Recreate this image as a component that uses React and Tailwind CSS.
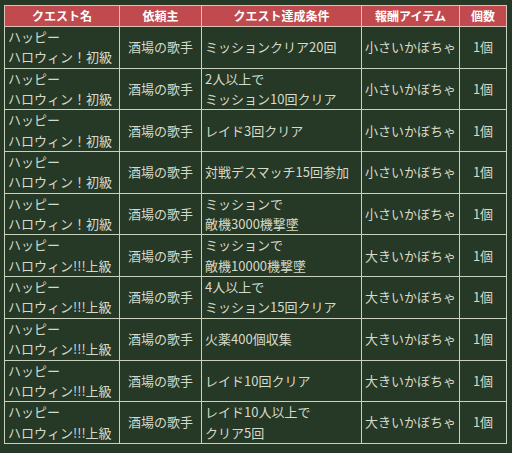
import React from "react";

const rows = [
  ["ハッピー\nハロウィン！初級", "酒場の歌手", "ミッションクリア20回", "小さいかぼちゃ"],
  ["ハッピー\nハロウィン！初級", "酒場の歌手", "2人以上で\nミッション10回クリア", "小さいかぼちゃ"],
  ["ハッピー\nハロウィン！初級", "酒場の歌手", "レイド3回クリア", "小さいかぼちゃ"],
  ["ハッピー\nハロウィン！初級", "酒場の歌手", "対戦デスマッチ15回参加", "小さいかぼちゃ"],
  ["ハッピー\nハロウィン！初級", "酒場の歌手", "ミッションで\n敵機3000機撃墜", "小さいかぼちゃ"],
  ["ハッピー\nハロウィン!!!上級", "酒場の歌手", "ミッションで\n敵機10000機撃墜", "大きいかぼちゃ"],
  ["ハッピー\nハロウィン!!!上級", "酒場の歌手", "4人以上で\nミッション15回クリア", "大きいかぼちゃ"],
  ["ハッピー\nハロウィン!!!上級", "酒場の歌手", "火薬400個収集", "大きいかぼちゃ"],
  ["ハッピー\nハロウィン!!!上級", "酒場の歌手", "レイド10回クリア", "大きいかぼちゃ"],
  ["ハッピー\nハロウィン!!!上級", "酒場の歌手", "レイド10人以上で\nクリア5回", "大きいかぼちゃ"],
];

export default function App() {
  return (
    <div
      className="w-[512px] h-[453px] bg-[#263826] pt-[5px] pl-[4px] overflow-hidden"
      style={{ fontFamily: '"Noto Sans CJK JP", "Noto Sans", sans-serif' }}
    >
      <table className="border-collapse table-fixed w-[502px] text-[13px] text-[#d6dac8]">
        <colgroup>
          <col className="w-[115px]" />
          <col className="w-[82px]" />
          <col className="w-[160px]" />
          <col className="w-[98px]" />
          <col className="w-[47px]" />
        </colgroup>
        <thead>
          <tr className="bg-[#c14a4f] text-white text-[12px] font-bold leading-[20px]">
            <th className="border border-[#d9c4b8] p-0 text-center">クエスト名</th>
            <th className="border border-[#d9c4b8] p-0 text-center">依頼主</th>
            <th className="border border-[#d9c4b8] p-0 text-center">クエスト達成条件</th>
            <th className="border border-[#d9c4b8] p-0 text-center">報酬アイテム</th>
            <th className="border border-[#d9c4b8] p-0 text-center">個数</th>
          </tr>
        </thead>
        <tbody>
          {rows.map((r, i) => (
            <tr key={i} className="leading-[20.35px]">
              <td className="border border-[#c8d2bc] py-0 pl-[3px] pr-0 text-left whitespace-pre-line align-middle">{r[0]}</td>
              <td className="border border-[#c8d2bc] p-0 text-center align-middle">{r[1]}</td>
              <td className="border border-[#c8d2bc] py-0 pl-[3px] pr-0 text-left whitespace-pre-line align-middle">{r[2]}</td>
              <td className="border border-[#c8d2bc] p-0 text-center align-middle">{r[3]}</td>
              <td className="border border-[#c8d2bc] p-0 text-center align-middle">1個</td>
            </tr>
          ))}
        </tbody>
      </table>
    </div>
  );
}
